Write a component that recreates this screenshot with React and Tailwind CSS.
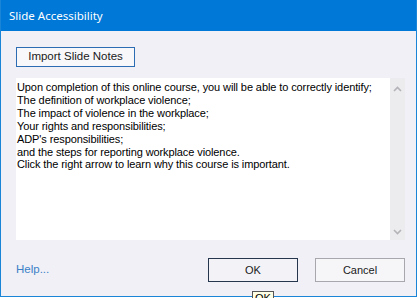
const lines = [
  "Upon completion of this online course, you will be able to correctly identify;",
  "The definition of workplace violence;",
  "The impact of violence in the workplace;",
  "Your rights and responsibilities;",
  "ADP's responsibilities;",
  "and the steps for reporting workplace violence.",
  "Click the right arrow to learn why this course is important.",
];

function Chevron({ up }) {
  return (
    <svg width="9" height="6" viewBox="0 0 9 6" fill="none" stroke="#b4b4b8" strokeWidth="1.6">
      {up ? <polyline points="1,5 4.5,1.5 8,5" /> : <polyline points="1,1 4.5,4.5 8,1" />}
    </svg>
  );
}

export default function App() {
  return (
    <div className="relative w-[417px] h-[298px] overflow-hidden bg-white" style={{ fontFamily: "'Liberation Sans', Arial, sans-serif" }}>
      <div className="h-[297px] flex flex-col border-l border-r border-b border-[#1a84d6]">
        {/* Title bar */}
        <div className="h-[31px] shrink-0 bg-[#0078d7] flex items-center px-[8px] text-white text-[11.5px]" style={{ fontFamily: "'Noto Sans', 'Open Sans', sans-serif" }}>
          Slide Accessibility
        </div>

        {/* Body */}
        <div className="flex-1 bg-[#f0f0f6] pl-[15px] pr-[11px] pt-[16px] flex flex-col">
          <button className="w-[119px] h-[20px] border border-[#2b6cb3] bg-[#f8f8fa] text-[11.5px] text-[#1a1a1a] leading-none">
            Import Slide Notes
          </button>

          <div className="mt-[11px] h-[162px] flex">
            <div className="flex-1 bg-white pl-[1px] pt-[3px] text-[11px] tracking-[-0.1px] leading-[12.9px] text-black">
              {lines.map((l, i) => (
                <div key={i} className="whitespace-nowrap">{l}</div>
              ))}
            </div>
            <div className="w-[15px] bg-[#ececef] flex flex-col items-center justify-between pt-[8px] pb-[5px]">
              <Chevron up />
              <Chevron />
            </div>
          </div>

          <div className="mt-[18px] flex items-center">
            <span className="text-[11.5px] text-[#3b7fc8]">Help...</span>
            <button className="ml-auto w-[90px] h-[24px] border border-[#26374d] bg-[#f3f3f7] text-[11px] text-[#1a1a1a]">
              OK
            </button>
            <button className="ml-[17px] w-[90px] h-[24px] border border-[#a7a7ad] bg-[#f6f6f9] text-[11px] text-[#1a1a1a]">
              Cancel
            </button>
          </div>
        </div>
      </div>

      {/* Tooltip */}
      <div className="absolute left-[252px] top-[291px] w-[22px] h-[12px] border border-[#555] bg-[#ffffe6] text-[11px] leading-[12px] text-center text-black">
        OK
      </div>
    </div>
  );
}
